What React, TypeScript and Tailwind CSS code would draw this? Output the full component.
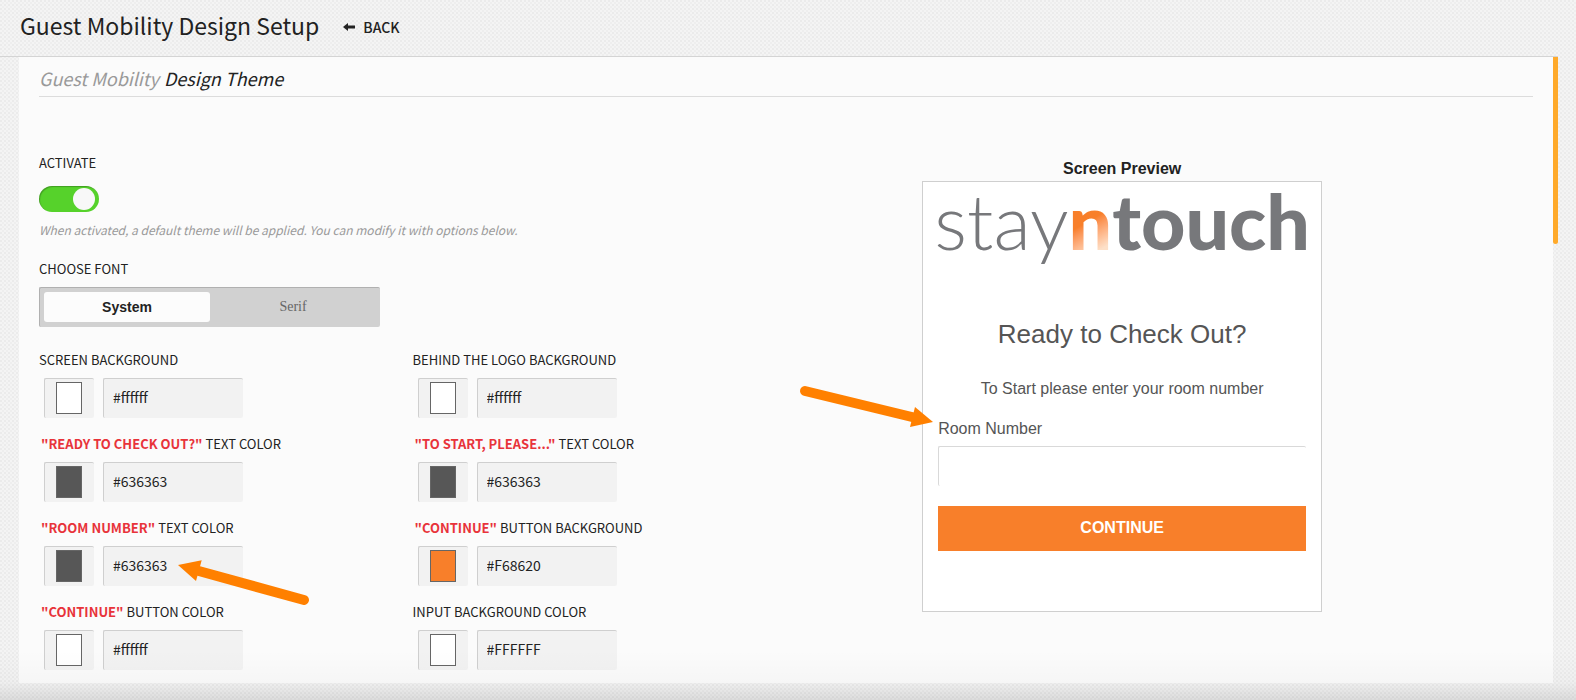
import { useState } from "react";

type Field = {
  id: string;
  highlight?: string;
  label: string;
  value: string;
  swatch: string;
  pointer?: boolean;
};

const fields: Field[] = [
  { id: "screen-bg", label: "SCREEN BACKGROUND", value: "#ffffff", swatch: "bg-white" },
  { id: "logo-bg", label: "BEHIND THE LOGO BACKGROUND", value: "#ffffff", swatch: "bg-white" },
  { id: "title-color", highlight: '"READY TO CHECK OUT?"', label: "TEXT COLOR", value: "#636363", swatch: "bg-[#575757]" },
  { id: "intro-color", highlight: '"TO START, PLEASE..."', label: "TEXT COLOR", value: "#636363", swatch: "bg-[#575757]" },
  { id: "room-color", highlight: '"ROOM NUMBER"', label: "TEXT COLOR", value: "#636363", swatch: "bg-[#575757]", pointer: true },
  { id: "button-bg", highlight: '"CONTINUE"', label: "BUTTON BACKGROUND", value: "#F68620", swatch: "bg-[#f87f2a]" },
  { id: "button-color", highlight: '"CONTINUE"', label: "BUTTON COLOR", value: "#ffffff", swatch: "bg-white" },
  { id: "input-bg", label: "INPUT BACKGROUND COLOR", value: "#FFFFFF", swatch: "bg-white" },
];

function ColorField({ field }: { field: Field }) {
  const [value, setValue] = useState(field.value);
  return (
    <div className="relative">
      <label htmlFor={field.id} className="flex h-5 items-center gap-[3px] text-[13px] leading-5 whitespace-nowrap">
        {field.highlight && <strong className="pl-0.5 font-bold text-[#e8333a]">{field.highlight}</strong>}
        <span>{field.label}</span>
      </label>
      <div className="mt-2 flex gap-[9px] pl-[5px]">
        <button
          type="button"
          aria-label={`Pick ${field.highlight ?? ""} ${field.label}`}
          className="flex h-10 w-[50px] justify-center rounded-xs border-t border-l border-[#cfcfcf] bg-[#f2f2f2] pt-[3px] pr-px"
        >
          <span className={`h-8 w-[26px] border border-[#666] ${field.swatch}`} />
        </button>
        <input
          id={field.id}
          value={value}
          onChange={(e) => setValue(e.target.value)}
          className="h-10 w-[140px] rounded-xs border-t border-l border-[#cfcfcf] bg-[#f2f2f2] px-[9px] pb-1 text-sm outline-none"
        />
      </div>
      {field.pointer && (
        <svg
          className="pointer-events-none absolute top-[31px] left-[137px] h-14 w-36 text-[#ff8000]"
          viewBox="0 0 144 56"
          fill="currentColor"
          aria-hidden="true"
        >
          <path d="M2 16 25.700 11.300 20 32Z" />
          <path d="M21 21.500 128 51" stroke="currentColor" strokeWidth="10" strokeLinecap="round" />
        </svg>
      )}
    </div>
  );
}

function Preview() {
  return (
    <section className="flex w-[45%] flex-col items-center pt-1 font-['Liberation_Sans',Arial,sans-serif]">
      <h3 className="text-base leading-6 font-bold">Screen Preview</h3>
      <div className="relative h-[431px] w-[400px] border border-[#cfcfcf] bg-white px-[15px] text-[#555]">
        <div className="flex h-[76px] items-center justify-center font-[Lato,sans-serif] text-[77px] leading-[76px] whitespace-nowrap text-[#77787b]">
          <span className="font-light">stay</span>
          <span className="bg-linear-150 from-[#f87f2a] from-50% to-[#fde0c8] to-85% bg-clip-text font-black text-transparent">n</span>
          <span className="font-black">touch</span>
        </div>
        <h4 className="mt-14 text-center text-[26px] leading-10">Ready to Check Out?</h4>
        <p className="mt-[23px] text-center text-base leading-6">To Start please enter your room number</p>
        <label htmlFor="room-number" className="mt-4 block text-base leading-6">
          Room Number
        </label>
        <input
          id="room-number"
          className="mt-[5px] block h-10 w-full rounded-xs border-t border-l border-[#d9d9d9] bg-white px-2.5 outline-none"
        />
        <button type="button" className="mt-5 block h-[45px] w-full bg-[#f87f2a] pb-[2px] text-base font-bold text-white">
          CONTINUE
        </button>
        <svg
          className="pointer-events-none absolute top-[200px] -left-[126px] h-14 w-[140px] text-[#ff8000]"
          viewBox="0 0 140 56"
          fill="currentColor"
          aria-hidden="true"
        >
          <path d="M136 40 118 25 113 45Z" />
          <path d="M8 9 117 35.500" stroke="currentColor" strokeWidth="10" strokeLinecap="round" />
        </svg>
      </div>
    </section>
  );
}

export default function App() {
  const [active, setActive] = useState(true);
  const [font, setFont] = useState("system");
  return (
    <div className="relative min-h-screen bg-[#f4f4f4] bg-[radial-gradient(circle_at_1px_1px,#ebebeb_1px,transparent_1px),radial-gradient(circle_at_3px_3px,#eeeeee_1px,transparent_1px)] bg-size-[4px_4px] pb-[17px] font-['Noto_Sans_CJK_SC',sans-serif] text-[#222]">
      <header className="mr-[18px] flex h-[57px] items-center gap-6 border-b border-[#d4d4d4] pb-1.5 pl-5">
        <h1 className="text-[23px] leading-8">Guest Mobility Design Setup</h1>
        <a href="#back" className="flex items-center gap-2 pt-1 text-sm font-medium">
          <svg viewBox="0 0 12 8" className="h-2 w-3" fill="currentColor" aria-hidden="true">
            <path d="M0 4 5 0V2.600H12V5.400H5V8Z" />
          </svg>
          BACK
        </a>
      </header>
      <main className="relative mr-[23px] ml-[19px] bg-[#fbfbfb] px-5 pb-[13px]">
        <h2 className="flex h-10 items-center gap-[5px] border-b border-[#dcdcdc] pt-0.5 text-lg leading-8 italic">
          <span className="text-[#999]">Guest Mobility</span>
          <span>Design Theme</span>
        </h2>
        <div className="flex pt-14">
          <div className="w-1/2">
            <label htmlFor="activate" className="block text-[13px] leading-5">
              ACTIVATE
            </label>
            <span className="relative mt-[13px] block h-[26px] w-[60px]">
              <input
                id="activate"
                type="checkbox"
                role="switch"
                checked={active}
                onChange={(e) => setActive(e.target.checked)}
                className="peer block h-[26px] w-[60px] appearance-none rounded-full bg-[#bbb] checked:bg-[#56d22b] checked:shadow-[inset_1px_1px_1px_rgba(0,0,0,0.25)]"
              />
              <span className="pointer-events-none absolute top-0.5 left-1 size-[22px] rounded-full bg-[#f8f8f8] peer-checked:left-[34px]" />
            </span>
            <p className="mt-2 text-xs leading-5 text-[#999] italic">
              When activated, a default theme will be applied. You can modify it with options below.
            </p>
            <h3 className="mt-[19px] text-[13px] leading-5">CHOOSE FONT</h3>
            <div className="mt-2 flex h-10 w-[341px] rounded-xs border-t border-l border-[#b0b0b0] bg-[#d1d1d1] p-1">
              <button
                type="button"
                onClick={() => setFont("system")}
                aria-pressed={font === "system"}
                className="h-[30px] flex-1 rounded-[3px] font-['Liberation_Sans',Arial,sans-serif] text-sm font-bold text-[#222] aria-pressed:bg-[#fcfcfc]"
              >
                System
              </button>
              <button
                type="button"
                onClick={() => setFont("serif")}
                aria-pressed={font === "serif"}
                className="h-[30px] flex-1 rounded-[3px] font-['Liberation_Serif',serif] text-sm text-[#666] aria-pressed:bg-[#fcfcfc]"
              >
                Serif
              </button>
            </div>
            <div className="mt-[23px] grid grid-cols-2 gap-y-4">
              {fields.map((f) => (
                <ColorField key={f.id} field={f} />
              ))}
            </div>
          </div>
          <Preview />
        </div>
        <div className="absolute top-0 left-full h-[187px] w-[5px] rounded-b-full bg-[#ffaa2b]" />
      </main>
      <div className="pointer-events-none absolute inset-x-0 bottom-0 h-[50px] bg-linear-to-b from-transparent via-black/2 via-65% to-black/10" />
    </div>
  );
}
